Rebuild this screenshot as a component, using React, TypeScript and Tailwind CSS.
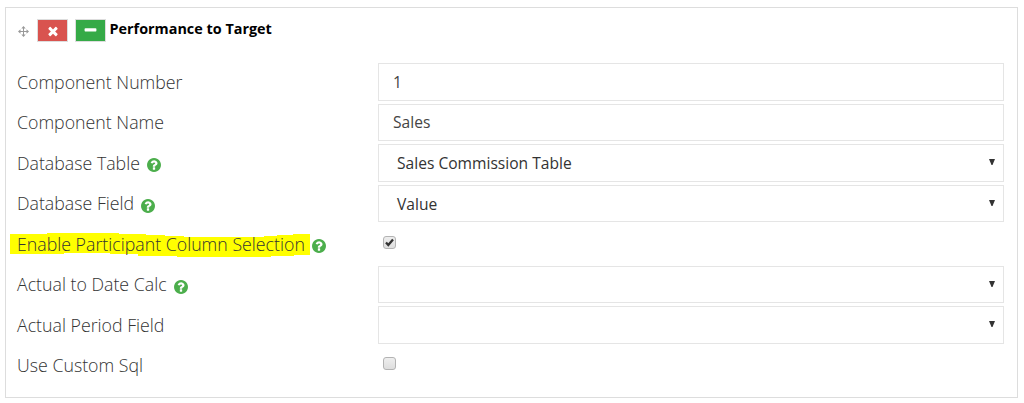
import { ReactNode } from "react";


const Help = () => (
    <svg viewBox="128 128 1536 1536" className="w-[14px] h-[14px] ml-[7px] mt-[4px] shrink-0 fill-[#4cae4c]">
        <path d="M1024 1376v-192q0-14-9-23t-23-9h-192q-14 0-23 9t-9 23v192q0 14 9 23t23 9h192q14 0 23-9t9-23zm256-672q0-88-55.500-163t-138.500-116-170.500-41q-243 0-371 213-15 24 8 42l132 100q7 6 19 6 16 0 25-12 53-68 86-92 34-24 86-24 48 0 85.500 26t37.500 59q0 38-20 61t-68 45q-63 28-115.500 86.500t-52.500 125.500v36q0 14 9 23t23 9h192q14 0 23-9t9-23q0-19 21.500-49.500t54.500-49.500q32-18 49-28.500t46-35 44.500-48 28-60.500 12.500-81zm384 192q0 209-103 385.500t-279.500 279.500-385.500 103-385.500-103-279.500-279.500-103-385.500 103-385.500 279.500-279.500 385.500-103 385.500 103 279.500 279.500 103 385.500z" />
    </svg>
)

type RowProps = { label: string; width: string; help?: boolean; highlight?: boolean; children: ReactNode }

const Row = ({ label, width, help, highlight, children }: RowProps) => (
    <div className="flex h-[40.5px]">
        <div className="relative flex items-center w-[361px] h-[38px] shrink-0 text-[17.75px] font-light text-[#333]">
            {/* marker stroke */}
            {highlight && (
                <svg viewBox="0 0 300 26" className="absolute left-[-7px] top-[7px] w-[300px] h-[26px] fill-[#ffff00]">
                    <path d="M0 2H37V1H109V2H136V3H155V4H174V5H254V4H267V3H283V2H300V23H284V24H261V25H167V24H128V22H100V21H54V22H0Z" />
                </svg>
            )}
            <span className={`relative whitespace-nowrap ${width}`}>{label}</span>
            {help && <Help />}
        </div>
        {children}
    </div>
)

const Input = ({ value }: { value: string }) => (
    <div className="flex items-center w-[626px] h-[37.5px] border border-[#e5e5e5] pl-[14px] pt-px text-[15.6px] text-[#444]">{value}</div>
)

const Select = ({ value }: { value?: string }) => (
    <div className="flex items-center justify-between w-[626px] h-[37.5px] border border-[#e5e5e5] pl-[18px] pr-[8px] text-[15.6px] text-[#333]">
        <span className="pt-[2.5px]">{value}</span>
        <svg viewBox="0 0 6 6" className="w-[6px] h-[6px] mb-px fill-[#333]">
            <path d="M0 0H6L3.500 6H2.500Z" />
        </svg>
    </div>
)

const Checkbox = ({ checked }: { checked?: boolean }) => (
    <div className="w-[13px] h-[13px] mt-[10.5px] ml-[5px] rounded-[3px] border border-[#b3b3b3] bg-linear-to-b from-[#eeeeee] to-[#dedede]">
        {checked && (
            <svg viewBox="0 0 11 11" className="w-[11px] h-[11px]">
                <path d="M2 5.500L4.300 8L9 2.500" fill="none" stroke="#333" strokeWidth="2.300" />
            </svg>
        )}
    </div>
)

const App: React.FC = () => {
    return (
        <section className="w-[1024px] h-[403px] bg-white pt-[7px] pl-[5px] font-['Open_Sans',sans-serif]">
            <div className="w-[1013px] h-[391px] border border-[#ddd] pl-[11px]">
                {/* header */}
                <div className="flex h-[55px] pt-[11px] pl-px">
                    <svg viewBox="0 0 11 11" className="w-[11px] h-[11px] mt-[7px] fill-[#999]">
                        <path d="M5.500 0L7.700 2.500H6V5H8.500V3.300L11 5.500L8.500 7.700V6H6V8.500H7.700L5.500 11L3.300 8.500H5V6H2.500V7.700L0 5.500L2.500 3.300V5H5V2.500H3.300Z" />
                    </svg>
                    <button type="button" className="flex items-center justify-center w-[31px] h-[23px] ml-[8px] border border-[#ddd] bg-[#d9534f]">
                        <svg viewBox="0 0 1792 1792" className="w-[14px] h-[14px] fill-white"><path d="M1490 1322q0 40-28 68l-136 136q-28 28-68 28t-68-28l-294-294-294 294q-28 28-68 28t-68-28l-136-136q-28-28-28-68t28-68l294-294-294-294q-28-28-28-68t28-68l136-136q28-28 68-28t68 28l294 294 294-294q28-28 68-28t68 28l136 136q28 28 28 68t-28 68l-294 294 294 294q28 28 28 68z" /></svg>
                    </button>
                    <button type="button" className="flex items-center justify-center w-[31px] h-[23px] ml-[7px] border border-[#ddd] bg-[#35aa47]">
                        <svg viewBox="0 0 1792 1792" className="w-[15px] h-[15px] mb-px fill-white"><path d="M1600 736v192q0 40-28 68t-68 28h-1216q-40 0-68-28t-28-68v-192q0-40 28-68t68-28h1216q40 0 68 28t28 68z" /></svg>
                    </button>
                    <h1 className="ml-[3.5px] text-[14.4px] leading-[20px] font-bold text-black whitespace-nowrap">Performance to Target</h1>
                </div>

                <Row label="Component Number" width="w-[165px]"><Input value="1" /></Row>
                <Row label="Component Name" width="w-[147px]"><Input value="Sales" /></Row>
                <Row label="Database Table" width="w-[123px]" help><Select value="Sales Commission Table" /></Row>
                <Row label="Database Field" width="w-[117px]" help><Select value="Value" /></Row>
                <Row label="Enable Participant Column Selection" width="w-[288px]" help highlight><Checkbox checked /></Row>
                <Row label="Actual to Date Calc" width="w-[150px]" help><Select /></Row>
                <Row label="Actual Period Field" width="w-[147px]"><Select /></Row>
                <Row label="Use Custom Sql" width="w-[126px]"><Checkbox /></Row>
            </div>
        </section>
    )
}

export default App
